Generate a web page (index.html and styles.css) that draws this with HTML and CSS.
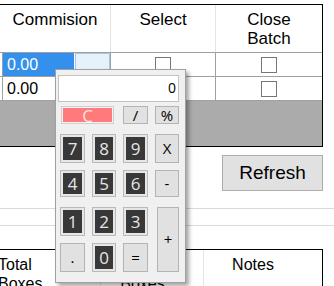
FILE: index.html
```html
<!DOCTYPE html>
<html lang="en">
<head>
    <meta charset="UTF-8">
    <title>Batches</title>
    <link rel="stylesheet" href="styles.css">
</head>
<body>

    <div class="page">
        <div class="grid top-grid">
            <div class="head">
                <div class="hcell">Commision</div>
                <div class="hcell sep">Select</div>
                <div class="hcell sep">Close<br>Batch</div>
            </div>
            <div class="row">
                <div class="cell first edit">
                    <span class="sel">0.00</span>
                    <span class="drop"></span>
                </div>
                <div class="cell sep mid"><span class="check"></span></div>
                <div class="cell sep mid"><span class="check"></span></div>
            </div>
            <div class="row">
                <div class="cell first"><span class="val">0.00</span></div>
                <div class="cell sep mid"><span class="check"></span></div>
                <div class="cell sep mid"><span class="check"></span></div>
            </div>
            <div class="empty"></div>
        </div>

        <div class="toolbar">
            <button class="refresh">Refresh</button>
        </div>

        <div class="blank-row"></div>

        <div class="grid bottom-grid">
            <div class="head">
                <div class="hcell left">Total<br>Boxes</div>
                <div class="hcell sep boxes">Total<br>Boxes</div>
                <div class="hcell sep notes">Notes</div>
            </div>
        </div>

        <div class="calc">
            <div class="display">0</div>
            <div class="keys">
                <button class="key clear">C</button>
                <button class="key op k-div">/</button>
                <button class="key op k-pct">%</button>

                <button class="key num r2">7</button>
                <button class="key num r2">8</button>
                <button class="key num r2">9</button>
                <button class="key op r2">X</button>

                <button class="key num r3">4</button>
                <button class="key num r3">5</button>
                <button class="key num r3">6</button>
                <button class="key op r3">-</button>

                <button class="key num r4">1</button>
                <button class="key num r4">2</button>
                <button class="key num r4">3</button>
                <button class="key op plus">+</button>

                <button class="key op r5">.</button>
                <button class="key num r5">0</button>
                <button class="key op r5">=</button>
            </div>
        </div>
    </div>

</body>
</html>
```

FILE: styles.css
```css
body {
    margin: 0;
    background: #fff;
    font-family: 'Liberation Sans', Arial, sans-serif;
    color: #000;
}

.page {
    position: relative;
    width: 334px;
    height: 286px;
    overflow: hidden;
}

.grid {
    width: 323px;
    box-sizing: border-box;
    border-top: 1px solid #000;
    border-right: 1px solid #000;
}

.top-grid {
    margin-top: 4px;
    border-bottom: 1px solid #000;
}

.head {
    display: grid;
    grid-template-columns: 110px 105px 107px;
    height: 48px;
    box-sizing: border-box;
    border-bottom: 1px solid #a0a0a0;
    font-size: 17px;
    line-height: 19px;
}

.hcell {
    text-align: center;
    padding-top: 5px;
}

.hcell.sep {
    border-left: 1px solid #e3e3e3;
}

.row {
    display: grid;
    grid-template-columns: 110px 105px 107px;
    height: 24px;
    box-sizing: border-box;
    border-bottom: 1px solid #a0a0a0;
    font-size: 16px;
    line-height: 23px;
}

.cell.first {
    margin-left: 2px;
    border-left: 1px solid #a0a0a0;
}

.cell.sep {
    border-left: 1px solid #a0a0a0;
}

.cell.mid {
    display: flex;
    align-items: center;
    justify-content: center;
}

.edit {
    display: flex;
}

.sel {
    width: 71px;
    background: #3390ec;
    color: #fff;
    padding-left: 4px;
    box-sizing: border-box;
}

.drop {
    width: 35px;
    margin-left: 1px;
    box-sizing: border-box;
    background: #e5f1fb;
    border: 1px solid #a9c6e4;
}

.val {
    padding-left: 4px;
}

.check {
    width: 16px;
    height: 16px;
    box-sizing: border-box;
    border: 1px solid #767676;
    background: #fff;
}

.empty {
    height: 45px;
    background: #ababab;
}

.toolbar {
    width: 323px;
    display: flex;
    justify-content: flex-end;
    margin-top: 8px;
}

.refresh {
    width: 101px;
    height: 36px;
    background: #e1e1e1;
    border: 1px solid #adadad;
    font-family: 'Liberation Sans', Arial, sans-serif;
    font-size: 19px;
    color: #000;
    padding: 0;
}

.blank-row {
    margin-top: 17px;
    height: 18px;
    box-sizing: border-box;
    border-top: 1px solid #dadada;
    border-bottom: 1px solid #dadada;
}

.bottom-grid {
    margin-top: 23px;
    height: 40px;
}

.bottom-grid .head {
    grid-template-columns: 100px 103px 119px;
    border-bottom: none;
    font-size: 16px;
}

.bottom-grid .hcell.left {
    text-align: left;
    margin-left: -2px;
}

.bottom-grid .hcell.boxes {
    padding-right: 19px;
}

.bottom-grid .hcell.notes {
    padding-right: 20px;
}

/* calculator popup */
.calc {
    position: absolute;
    left: 55px;
    top: 69px;
    width: 131px;
    height: 214px;
    box-sizing: border-box;
    background: #f0f0f0;
    border: 1px solid #a0a0a0;
    box-shadow: 3px 3px 4px rgba(0, 0, 0, 0.35);
    padding: 5px 2px 0 2px;
    font-family: 'Open Sans', 'Noto Sans', sans-serif;
}

.display {
    width: 121px;
    height: 27px;
    box-sizing: border-box;
    background: #fff;
    border: 1px solid #c3c3c3;
    text-align: right;
    padding-right: 2px;
    font-size: 14px;
    line-height: 24px;
}

.keys {
    display: grid;
    margin: 4px 0 0 2px;
    grid-template-columns: 25px 24px 25px 24px;
    grid-template-rows: 18px 10px 29px 7px 27px 10px 29px 7px 29px;
    column-gap: 7px;
}

.key {
    padding: 0;
    margin: 0;
    box-sizing: border-box;
    font-family: 'Open Sans', 'Noto Sans', sans-serif;
    font-size: 17px;
    line-height: 1;
}

.key.op {
    background: #e1e1e1;
    border: 1px solid #b4b4b4;
    color: #000;
    font-size: 15px;
}

.key.num {
    background: #383838;
    border: 1px solid #b9b9b9;
    box-shadow: inset 0 0 0 2px #e6e6e6;
    color: #e6e6e6;
}

.key.clear {
    grid-column: 1 / 3;
    grid-row: 1;
    width: 53px;
    margin-left: 1px;
    background: #ff7a7a;
    border: 1px solid #cfcfcf;
    box-shadow: inset 0 0 0 1px #f3f3f3;
    color: #ffe0e0;
}

.k-div {
    grid-column: 3;
    grid-row: 1;
}

.k-pct {
    grid-column: 4;
    grid-row: 1;
}

.r2 {
    grid-row: 3;
}

.r3 {
    grid-row: 5;
}

.r4 {
    grid-row: 7;
}

.r5 {
    grid-row: 9;
}

.key.plus {
    grid-column: 4;
    grid-row: 7 / 10;
    margin-left: 2px;
}
```
